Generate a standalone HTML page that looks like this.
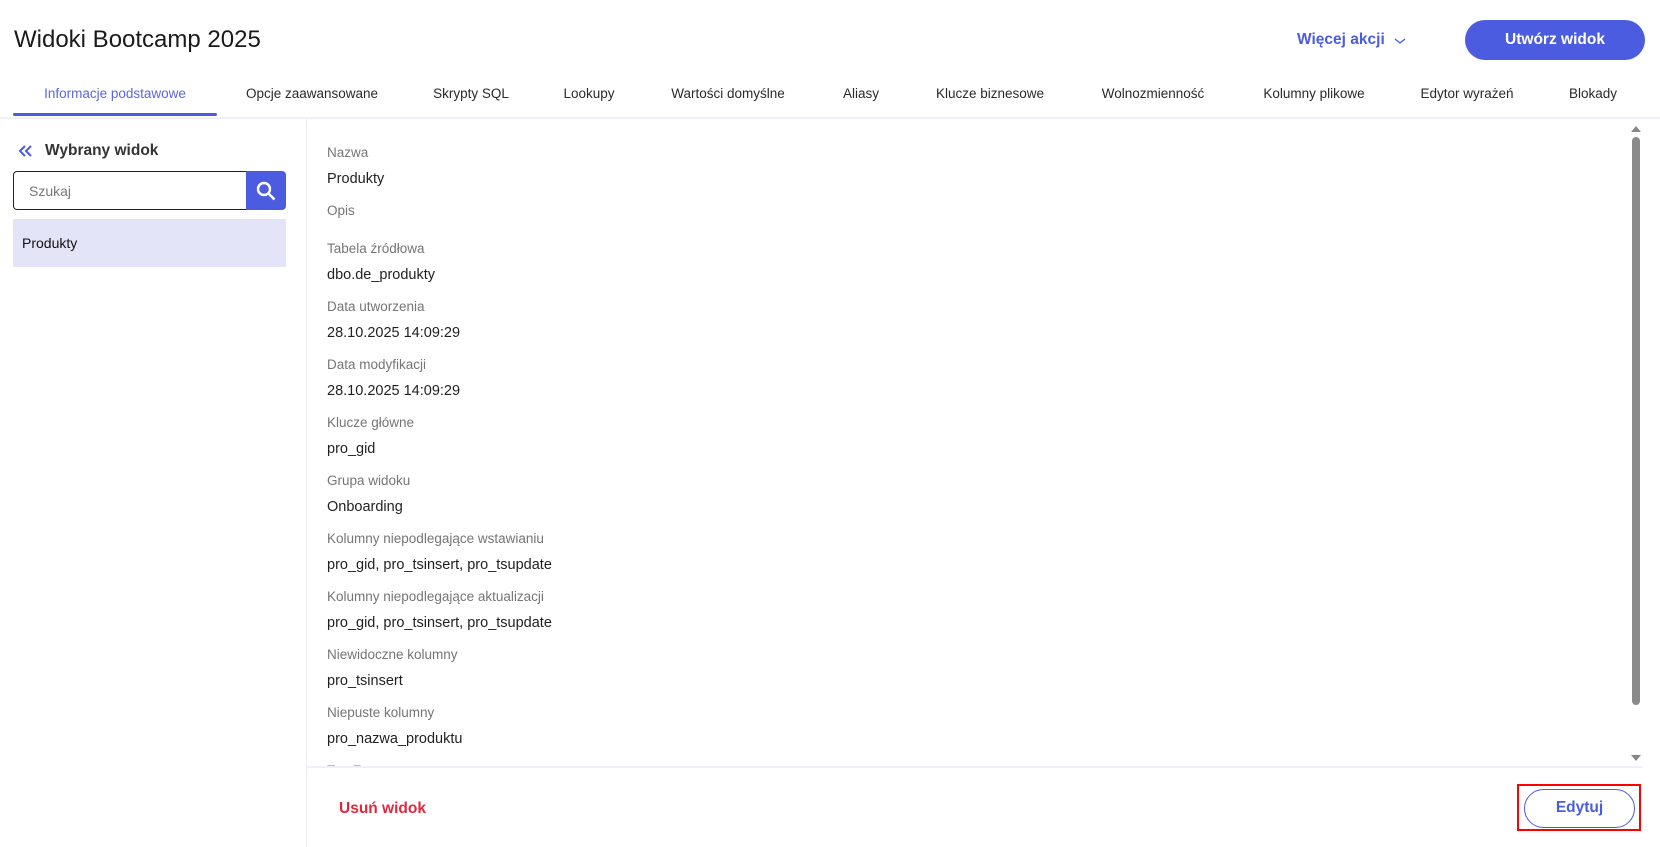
<!DOCTYPE html>
<html><head><meta charset="utf-8"><style>
*{margin:0;padding:0;box-sizing:border-box}
body{width:1660px;height:847px;overflow:hidden;background:#fff;font-family:"Liberation Sans",sans-serif;color:#1f1f1f;position:relative}
.a{position:absolute;white-space:nowrap}
.tab{position:absolute;top:86px;font-size:13.5px;color:#2a2a2a;transform:translateX(-50%)}
.lbl{position:absolute;left:327px;font-size:13.5px;color:#757575}
.val{position:absolute;left:327px;font-size:14.5px;color:#1f1f1f}
</style></head><body>
<div class="a" style="left:14px;top:26px;font-size:24px;color:#1a1a1a">Widoki Bootcamp 2025</div>
<div class="a" style="left:1297px;top:31px;font-size:15.5px;color:#4b5ce0;font-weight:bold">Więcej akcji</div>
<svg class="a" style="left:1393px;top:36px" width="14" height="10"><path d="M2 3l5 4 5-4" stroke="#4b5ce0" stroke-width="1.3" fill="none"/></svg>
<div class="a" style="left:1465px;top:20px;width:180px;height:40px;border-radius:20px;background:#4b5ce0;color:#fff;font-weight:bold;font-size:15.5px;text-align:center;line-height:40px">Utwórz widok</div>

<div class="tab" style="left:115px;color:#5a67e0">Informacje podstawowe</div>
<div class="tab" style="left:312px">Opcje zaawansowane</div>
<div class="tab" style="left:471px">Skrypty SQL</div>
<div class="tab" style="left:589px">Lookupy</div>
<div class="tab" style="left:728px">Wartości domyślne</div>
<div class="tab" style="left:861px">Aliasy</div>
<div class="tab" style="left:990px">Klucze biznesowe</div>
<div class="tab" style="left:1153px">Wolnozmienność</div>
<div class="tab" style="left:1314px">Kolumny plikowe</div>
<div class="tab" style="left:1467px">Edytor wyrażeń</div>
<div class="tab" style="left:1593px">Blokady</div>
<div class="a" style="left:13px;top:113px;width:204px;height:3px;border-radius:2px;background:#4b5ce0"></div>
<div class="a" style="left:0;top:117px;width:1660px;height:2px;background:#f0f0fa"></div>

<div class="a" style="left:306px;top:119px;width:1px;height:728px;background:#eeeef4"></div>
<svg class="a" style="left:17px;top:144px" width="18" height="14"><path d="M8 2L3 7l5 5M14 2L9 7l5 5" stroke="#4b5ce0" stroke-width="2" fill="none"/></svg>
<div class="a" style="left:45px;top:142px;font-size:15.5px;font-weight:bold;color:#333">Wybrany widok</div>
<div class="a" style="left:13px;top:171px;width:234px;height:39px;border:1.5px solid #222;border-right:none;border-radius:4px 0 0 4px"></div>
<div class="a" style="left:29px;top:183px;font-size:14px;color:#777">Szukaj</div>
<div class="a" style="left:246px;top:171px;width:40px;height:39px;background:#4b5ce0;border-radius:0 4px 4px 0"></div>
<svg class="a" style="left:255px;top:180px" width="22" height="22"><circle cx="9" cy="9" r="6" stroke="#fff" stroke-width="2.4" fill="none"/><path d="M13.5 13.5l6 6" stroke="#fff" stroke-width="2.6"/></svg>
<div class="a" style="left:13px;top:219px;width:273px;height:48px;background:#e3e4f7"></div>
<div class="a" style="left:22px;top:235px;font-size:14px;color:#111">Produkty</div>

<div class="lbl" style="top:145px">Nazwa</div><div class="val" style="top:171px">Produkty</div>
<div class="lbl" style="top:203px">Opis</div>
<div class="lbl" style="top:241px">Tabela źródłowa</div><div class="val" style="top:267px">dbo.de_produkty</div>
<div class="lbl" style="top:299px">Data utworzenia</div><div class="val" style="top:325px">28.10.2025 14:09:29</div>
<div class="lbl" style="top:357px">Data modyfikacji</div><div class="val" style="top:383px">28.10.2025 14:09:29</div>
<div class="lbl" style="top:415px">Klucze główne</div><div class="val" style="top:441px">pro_gid</div>
<div class="lbl" style="top:473px">Grupa widoku</div><div class="val" style="top:499px">Onboarding</div>
<div class="lbl" style="top:531px">Kolumny niepodlegające wstawianiu</div><div class="val" style="top:557px">pro_gid, pro_tsinsert, pro_tsupdate</div>
<div class="lbl" style="top:589px">Kolumny niepodlegające aktualizacji</div><div class="val" style="top:615px">pro_gid, pro_tsinsert, pro_tsupdate</div>
<div class="lbl" style="top:647px">Niewidoczne kolumny</div><div class="val" style="top:673px">pro_tsinsert</div>
<div class="lbl" style="top:705px">Niepuste kolumny</div><div class="val" style="top:731px">pro_nazwa_produktu</div>
<div class="lbl" style="top:763px">Typ E</div>
<div class="a" style="left:307px;top:766px;width:1336px;height:81px;background:#fff"></div>

<svg class="a" style="left:1630px;top:124px" width="12" height="10"><path d="M1 8l5-6 5 6z" fill="#888"/></svg>
<div class="a" style="left:1632px;top:137px;width:8px;height:568px;border-radius:4px;background:#8a8a8a"></div>
<svg class="a" style="left:1630px;top:753px" width="12" height="10"><path d="M1 2l5 6 5-6z" fill="#888"/></svg>
<div class="a" style="left:307px;top:766px;width:1336px;height:2px;background:#f0f0fa"></div>

<div class="a" style="left:339px;top:800px;font-size:15.5px;font-weight:bold;color:#e0283c">Usuń widok</div>
<div class="a" style="left:1517px;top:784px;width:124px;height:47px;border:2px solid #f00"></div>
<div class="a" style="left:1524px;top:789px;width:111px;height:39px;border:1.5px solid #4b5ce0;border-radius:20px;color:#4b5ce0;font-weight:bold;font-size:15.5px;text-align:center;line-height:36px">Edytuj</div>
</body></html>
